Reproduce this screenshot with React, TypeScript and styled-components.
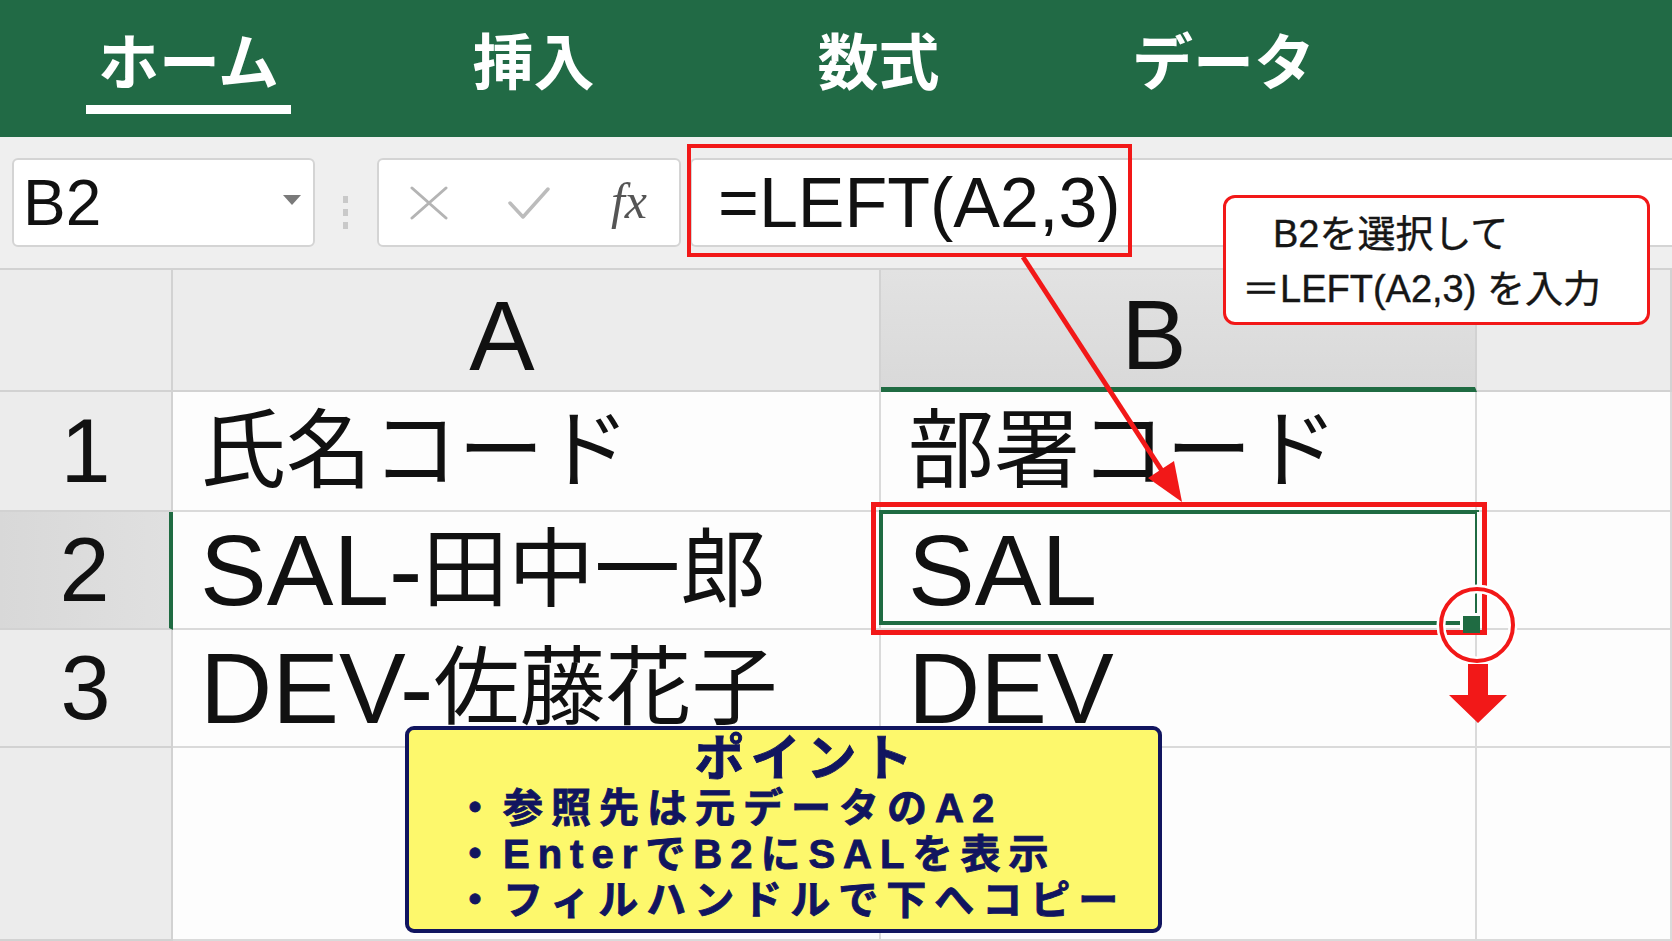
import React from 'react';
import styled, { createGlobalStyle } from 'styled-components';

const GlobalStyle = createGlobalStyle`
  html, body {
    margin: 0;
    padding: 0;
    background: #ffffff;
  }
  body {
    font-family: "Liberation Sans", "Noto Sans CJK JP", sans-serif;
  }
  * {
    box-sizing: border-box;
  }
`;

const GREEN = '#1f6b42';
const RED = '#f21818';
const NAVY = '#11155f';

const Page = styled.div`
  position: relative;
  width: 1672px;
  height: 941px;
  overflow: hidden;
  display: flex;
  flex-direction: column;
  background: #ffffff;
`;

/* ---------- ribbon ---------- */

const Ribbon = styled.div`
  flex: none;
  height: 137px;
  background: #216a45;
  display: flex;
  align-items: flex-start;
  padding: 26px 0 0 16px;
`;

const TabSlot = styled.div`
  width: 345px;
  display: flex;
  justify-content: center;
`;

const Tab = styled.div`
  display: flex;
  flex-direction: column;
`;

const TabLabel = styled.span`
  padding: 0 12px;
  font-family: "Noto Sans CJK JP", sans-serif;
  font-size: 61px;
  font-weight: 700;
  line-height: 66px;
  color: #ffffff;
  white-space: nowrap;
`;

const TabUnderline = styled.span<{ $active?: boolean }>`
  height: 9px;
  margin-top: 13px;
  background: ${p => (p.$active ? '#ffffff' : 'transparent')};
`;

/* ---------- formula bar ---------- */

const FormulaBar = styled.div`
  flex: none;
  height: 133px;
  background: #efefef;
  border-bottom: 2px solid #d2d2d2;
  display: flex;
  align-items: flex-start;
  padding: 21px 0 0 12px;
`;

const NameBox = styled.div`
  width: 303px;
  height: 89px;
  background: #ffffff;
  border: 2px solid #d4d4d4;
  border-radius: 6px;
  display: flex;
  align-items: center;
  justify-content: space-between;
  padding: 0 12px 0 9px;
`;

const NameText = styled.span`
  font-size: 64px;
  line-height: 1;
  color: #111111;
`;

const Caret = styled.span`
  width: 0;
  height: 0;
  margin-top: -6px;
  border-left: 9px solid transparent;
  border-right: 9px solid transparent;
  border-top: 10px solid #7a7a7a;
`;

const Dots = styled.span`
  align-self: center;
  width: 5px;
  height: 34px;
  margin: 0 29px 0 28px;
  background: repeating-linear-gradient(#c9c9c9 0 7px, transparent 7px 13px);
`;

const ButtonBox = styled.div`
  width: 304px;
  height: 89px;
  background: #ffffff;
  border: 2px solid #d4d4d4;
  border-radius: 6px;
  display: grid;
  grid-template-columns: repeat(3, 1fr);
  align-items: center;
  justify-items: center;
`;

const Fx = styled.span`
  font-family: "Liberation Serif", serif;
  font-style: italic;
  font-size: 50px;
  line-height: 1;
  color: #555555;
  margin-top: -4px;
`;

const FormulaInput = styled.div`
  position: relative;
  flex: 1;
  height: 89px;
  margin-left: 9px;
  background: #ffffff;
  border: 2px solid #d4d4d4;
  border-right: none;
  border-radius: 6px 0 0 6px;
  display: flex;
  align-items: center;
  padding-left: 26px;
  font-size: 70px;
  line-height: 1;
  color: #111111;
`;

const FormulaMark = styled.div`
  position: absolute;
  left: -5px;
  top: -16px;
  width: 445px;
  height: 113px;
  border: 4px solid ${RED};
`;

/* ---------- sheet ---------- */

const Sheet = styled.div`
  flex: 1;
  display: grid;
  grid-template-columns: 173px 708px 596px 1fr;
  grid-template-rows: 122px 120px 118px 118px 1fr;
`;

const Corner = styled.div`
  background: #ececec;
  border-right: 2px solid #d2d2d2;
  border-bottom: 2px solid #d2d2d2;
`;

const ColHeader = styled.div<{ $selected?: boolean }>`
  background: ${p => (p.$selected ? 'linear-gradient(#e2e2e2, #d9d9d9)' : '#ececec')};
  border-right: 2px solid #d2d2d2;
  border-bottom: ${p => (p.$selected ? `5px solid ${GREEN}` : '2px solid #d2d2d2')};
  display: flex;
  align-items: center;
  justify-content: center;
  padding: 12px 48px 0 0;
  font-size: 98px;
  line-height: 1;
  color: #111111;
`;

const RowHeader = styled.div<{ $selected?: boolean }>`
  background: ${p => (p.$selected ? 'linear-gradient(90deg, #d8d8d8, #e0e0e0)' : '#ececec')};
  border-right: ${p => (p.$selected ? `4px solid ${GREEN}` : '2px solid #d2d2d2')};
  border-bottom: 2px solid #d2d2d2;
  display: flex;
  align-items: center;
  justify-content: center;
  font-size: 90px;
  line-height: 1;
  color: #111111;
`;

const Cell = styled.div<{ $selected?: boolean }>`
  position: relative;
  background: #fdfdfd;
  border-right: 2px solid #dadada;
  border-bottom: 2px solid #dadada;
  display: flex;
  align-items: center;
  padding-left: 27px;
  font-size: 86px;
  line-height: 1;
  color: #111111;
  white-space: nowrap;

  ${p =>
    p.$selected &&
    `
    &::after {
      content: '';
      position: absolute;
      top: -2px;
      left: -2px;
      right: -4px;
      bottom: 3px;
      border: 4px solid ${GREEN};
      pointer-events: none;
    }
  `}
`;

const Latin = styled.span`
  font-family: "Liberation Sans", sans-serif;
  font-size: 100px;
`;

const CellMark = styled.div`
  position: absolute;
  top: -10px;
  left: -10px;
  right: -12px;
  bottom: -7px;
  border: 5px solid ${RED};
  z-index: 2;
`;

const FillHandle = styled.div`
  position: absolute;
  right: -5px;
  bottom: -5px;
  width: 17px;
  height: 17px;
  background: ${GREEN};
  box-shadow: -3px -3px 0 0 #ffffff;
  z-index: 3;
`;

/* ---------- annotations ---------- */

const Callout = styled.div`
  position: absolute;
  left: 1223px;
  top: 195px;
  width: 427px;
  height: 130px;
  z-index: 5;
  background: #ffffff;
  border: 3px solid ${RED};
  border-radius: 12px;
  padding: 9px 0 0 16px;
  font-family: "Liberation Sans", "Noto Sans CJK JP", sans-serif;
  font-size: 38px;
  line-height: 55px;
  color: #161616;
  white-space: nowrap;
  -webkit-text-stroke: 0.4px #161616;
`;

const CalloutLine = styled.div<{ $indent?: number }>`
  padding-left: ${p => p.$indent ?? 0}px;
`;

const PointBox = styled.div`
  position: absolute;
  left: 405px;
  top: 726px;
  width: 757px;
  height: 207px;
  z-index: 5;
  background: #fdf86c;
  border: 4px solid ${NAVY};
  border-radius: 9px;
  padding: 3px 0 0 46px;
  color: ${NAVY};
  font-family: "Liberation Sans", "Noto Sans CJK JP", sans-serif;
  font-weight: 700;
  white-space: nowrap;
  -webkit-text-stroke: 0.9px ${NAVY};
`;

const PointTitle = styled.div`
  text-align: center;
  font-size: 50px;
  line-height: 52px;
  letter-spacing: 6px;
`;

const PointLine = styled.div`
  font-size: 40px;
  line-height: 46px;
  letter-spacing: 8px;
`;

const Overlay = styled.svg`
  position: absolute;
  left: 0;
  top: 0;
  z-index: 6;
  pointer-events: none;
`;

const CrossIcon = () => (
  <svg width="40" height="34" viewBox="0 0 40 34">
    <path d="M3 2 L37 32 M37 2 L3 32" stroke="#b4b4b4" strokeWidth="3" fill="none" strokeLinecap="round" />
  </svg>
);

const CheckIcon = () => (
  <svg width="44" height="34" viewBox="0 0 44 34">
    <path d="M3 17 L16 31 L41 3" stroke="#bcbcbc" strokeWidth="3.5" fill="none" strokeLinecap="round" strokeLinejoin="round" />
  </svg>
);

const tabs = ['ホーム', '挿入', '数式', 'データ'];

export default function App() {
  return (
    <Page>
      <GlobalStyle />

      <Ribbon>
        {tabs.map((t, i) => (
          <TabSlot key={t}>
            <Tab>
              <TabLabel>{t}</TabLabel>
              <TabUnderline $active={i === 0} />
            </Tab>
          </TabSlot>
        ))}
      </Ribbon>

      <FormulaBar>
        <NameBox>
          <NameText>B2</NameText>
          <Caret />
        </NameBox>
        <Dots />
        <ButtonBox>
          <CrossIcon />
          <CheckIcon />
          <Fx>fx</Fx>
        </ButtonBox>
        <FormulaInput>
          =LEFT(A2,3)
          <FormulaMark />
        </FormulaInput>
      </FormulaBar>

      <Sheet>
        <Corner />
        <ColHeader>A</ColHeader>
        <ColHeader $selected>B</ColHeader>
        <ColHeader />

        <RowHeader>1</RowHeader>
        <Cell>氏名コード</Cell>
        <Cell>部署コード</Cell>
        <Cell />

        <RowHeader $selected>2</RowHeader>
        <Cell>
          <Latin>SAL-</Latin>田中一郎
        </Cell>
        <Cell $selected>
          <Latin>SAL</Latin>
          <CellMark />
          <FillHandle />
        </Cell>
        <Cell />

        <RowHeader>3</RowHeader>
        <Cell>
          <Latin>DEV-</Latin>佐藤花子
        </Cell>
        <Cell>
          <Latin>DEV</Latin>
        </Cell>
        <Cell />

        <RowHeader />
        <Cell />
        <Cell />
        <Cell />
      </Sheet>

      <Callout>
        <CalloutLine $indent={31}>B2を選択して</CalloutLine>
        <CalloutLine>＝LEFT(A2,3) を入力</CalloutLine>
      </Callout>

      <PointBox>
        <PointTitle>ポイント</PointTitle>
        <PointLine>・参照先は元データのA2</PointLine>
        <PointLine>・EnterでB2にSALを表示</PointLine>
        <PointLine>・フィルハンドルで下へコピー</PointLine>
      </PointBox>

      <Overlay width="1672" height="941" viewBox="0 0 1672 941">
        <line x1="1023" y1="257" x2="1166" y2="477" stroke={RED} strokeWidth="5" />
        <polygon points="1182,502 1148,478 1174,461" fill={RED} />
        <circle cx="1477" cy="625" r="36" fill="none" stroke="#ffffff" strokeWidth="9" />
        <circle cx="1477" cy="625" r="36" fill="none" stroke={RED} strokeWidth="4" />
        <polygon points="1468,664 1488,664 1488,695 1507,695 1478,723 1449,695 1468,695" fill={RED} />
      </Overlay>
    </Page>
  );
}
